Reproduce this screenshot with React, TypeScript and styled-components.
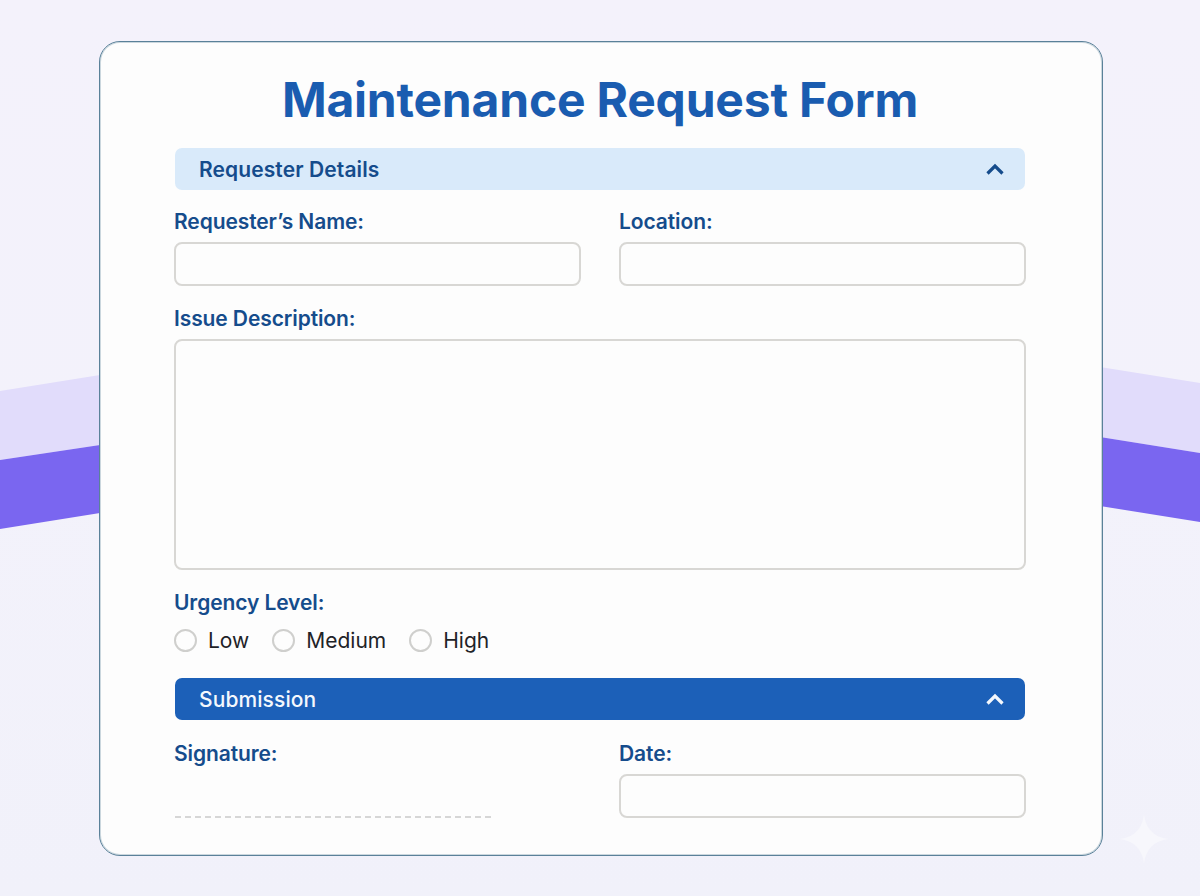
import React from "react";
import styled, { createGlobalStyle } from "styled-components";

const Global = createGlobalStyle`
  html, body { margin: 0; padding: 0; }
  body { background: #f3f2fb; font-family: Inter, "Liberation Sans", sans-serif; }
`;

const Page = styled.div`
  position: relative;
  width: 1200px;
  height: 896px;
  overflow: hidden;
  padding: 41px 97px 40px 99px;
  box-sizing: border-box;
  background: linear-gradient(180deg, #f4f2fb 0%, #f3f2fb 50%, #f1f1fa 100%);
`;

const Backdrop = styled.svg`
  position: absolute;
  inset: 0;
  width: 1200px;
  height: 896px;
`;

const Card = styled.main`
  position: relative;
  box-sizing: border-box;
  width: 1004px;
  height: 815px;
  border: 1px solid #5a8199;
  border-radius: 21px;
  box-shadow: inset 0 0 0 1px rgba(90, 129, 153, 0.3);
  background: #fdfdfd;
  padding: 28px 76px 0 74px;
  display: flex;
  flex-direction: column;
`;

const Title = styled.h1`
  margin: 0 0 18px;
  height: 60px;
  line-height: 60px;
  text-align: center;
  font-size: 48px;
  font-weight: 700;
  letter-spacing: -0.2px;
  color: #1a5cb0;
`;

const SectionBar = styled.div<{ $solid?: boolean }>`
  flex: none;
  box-sizing: border-box;
  height: 42px;
  margin: 0 1px;
  padding: 0 20px 0 24px;
  border-radius: 7px;
  display: flex;
  align-items: center;
  justify-content: space-between;
  background: ${(p) => (p.$solid ? "#1c60b8" : "#d9eafa")};
  color: ${(p) => (p.$solid ? "#f4f8fd" : "#154c8c")};
  font-size: 21px;
  letter-spacing: 0.1px;
  font-weight: ${(p) => (p.$solid ? 500 : 600)};
`;

const Chevron = styled.svg`
  width: 20px;
  height: 14px;
  fill: none;
  stroke: currentColor;
  stroke-width: 3.2;
`;

const TwoCols = styled.div<{ $top: number }>`
  margin-top: ${(p) => p.$top}px;
  display: grid;
  grid-template-columns: 407px 407px;
  column-gap: 38px;
`;

const Field = styled.div`
  display: flex;
  flex-direction: column;
`;

const Label = styled.label`
  display: block;
  height: 26px;
  line-height: 26px;
  font-size: 21px;
  font-weight: 600;
  letter-spacing: -0.1px;
  color: #154c8c;
  margin-bottom: 7px;
`;

const Input = styled.div`
  box-sizing: border-box;
  height: 44px;
  border: 2px solid #d8d7d4;
  border-radius: 8px;
  background: #fdfdfd;
`;

const TextArea = styled(Input)`
  height: 231px;
`;

const DescriptionField = styled(Field)`
  margin-top: 20px;
`;

const UrgencyField = styled(Field)`
  margin-top: 20px;
`;

const RadioRow = styled.div`
  display: flex;
  align-items: center;
  height: 24px;
  margin-top: 5px;
  margin-bottom: 26px;
`;

const RadioItem = styled.span`
  display: inline-flex;
  align-items: center;
  gap: 11px;
  margin-right: 23px;
  font-size: 21px;
  color: #1f2328;
`;

const RadioDot = styled.span`
  box-sizing: border-box;
  width: 23px;
  height: 23px;
  border-radius: 50%;
  border: 2px solid #cfcfcd;
  background: #fdfdfd;
`;

const SignatureLine = styled.div`
  margin-top: 42px;
  height: 0;
  width: 316px;
  margin-left: 1px;
  border-top: 2px dashed #d6d6d6;
`;

const Sparkle = styled.svg`
  position: absolute;
  left: 1120px;
  top: 815px;
  width: 48px;
  height: 48px;
  fill: #f7f7fc;
`;

const Up = () => (
  <Chevron viewBox="0 0 20 14">
    <path d="M2.5 11.5 L10 4 L17.5 11.5" />
  </Chevron>
);

export default function App() {
  return (
    <>
      <Global />
      <Page>
        <Backdrop viewBox="0 0 1200 896">
          <polygon points="0,391 100,375 100,445 0,460" fill="#e1dcfb" />
          <polygon points="0,460 100,445 100,513 0,529" fill="#7a66f0" />
          <polygon points="1100,367 1200,383 1200,453 1100,437" fill="#e1dcfb" />
          <polygon points="1100,437 1200,453 1200,522 1100,506" fill="#7a66f0" />
        </Backdrop>
        <Sparkle viewBox="0 0 48 48">
          <path d="M24 0 C26 14 34 22 48 24 C34 26 26 34 24 48 C22 34 14 26 0 24 C14 22 22 14 24 0 Z" />
        </Sparkle>
        <Card>
          <Title>Maintenance Request Form</Title>
          <SectionBar>
            <span>Requester Details</span>
            <Up />
          </SectionBar>
          <TwoCols $top={19}>
            <Field>
              <Label>Requester’s Name:</Label>
              <Input />
            </Field>
            <Field>
              <Label>Location:</Label>
              <Input />
            </Field>
          </TwoCols>
          <DescriptionField>
            <Label>Issue Description:</Label>
            <TextArea />
          </DescriptionField>
          <UrgencyField>
            <Label>Urgency Level:</Label>
            <RadioRow>
              <RadioItem><RadioDot />Low</RadioItem>
              <RadioItem><RadioDot />Medium</RadioItem>
              <RadioItem><RadioDot />High</RadioItem>
            </RadioRow>
          </UrgencyField>
          <SectionBar $solid>
            <span>Submission</span>
            <Up />
          </SectionBar>
          <TwoCols $top={21}>
            <Field>
              <Label>Signature:</Label>
              <SignatureLine />
            </Field>
            <Field>
              <Label>Date:</Label>
              <Input />
            </Field>
          </TwoCols>
        </Card>
      </Page>
    </>
  );
}
